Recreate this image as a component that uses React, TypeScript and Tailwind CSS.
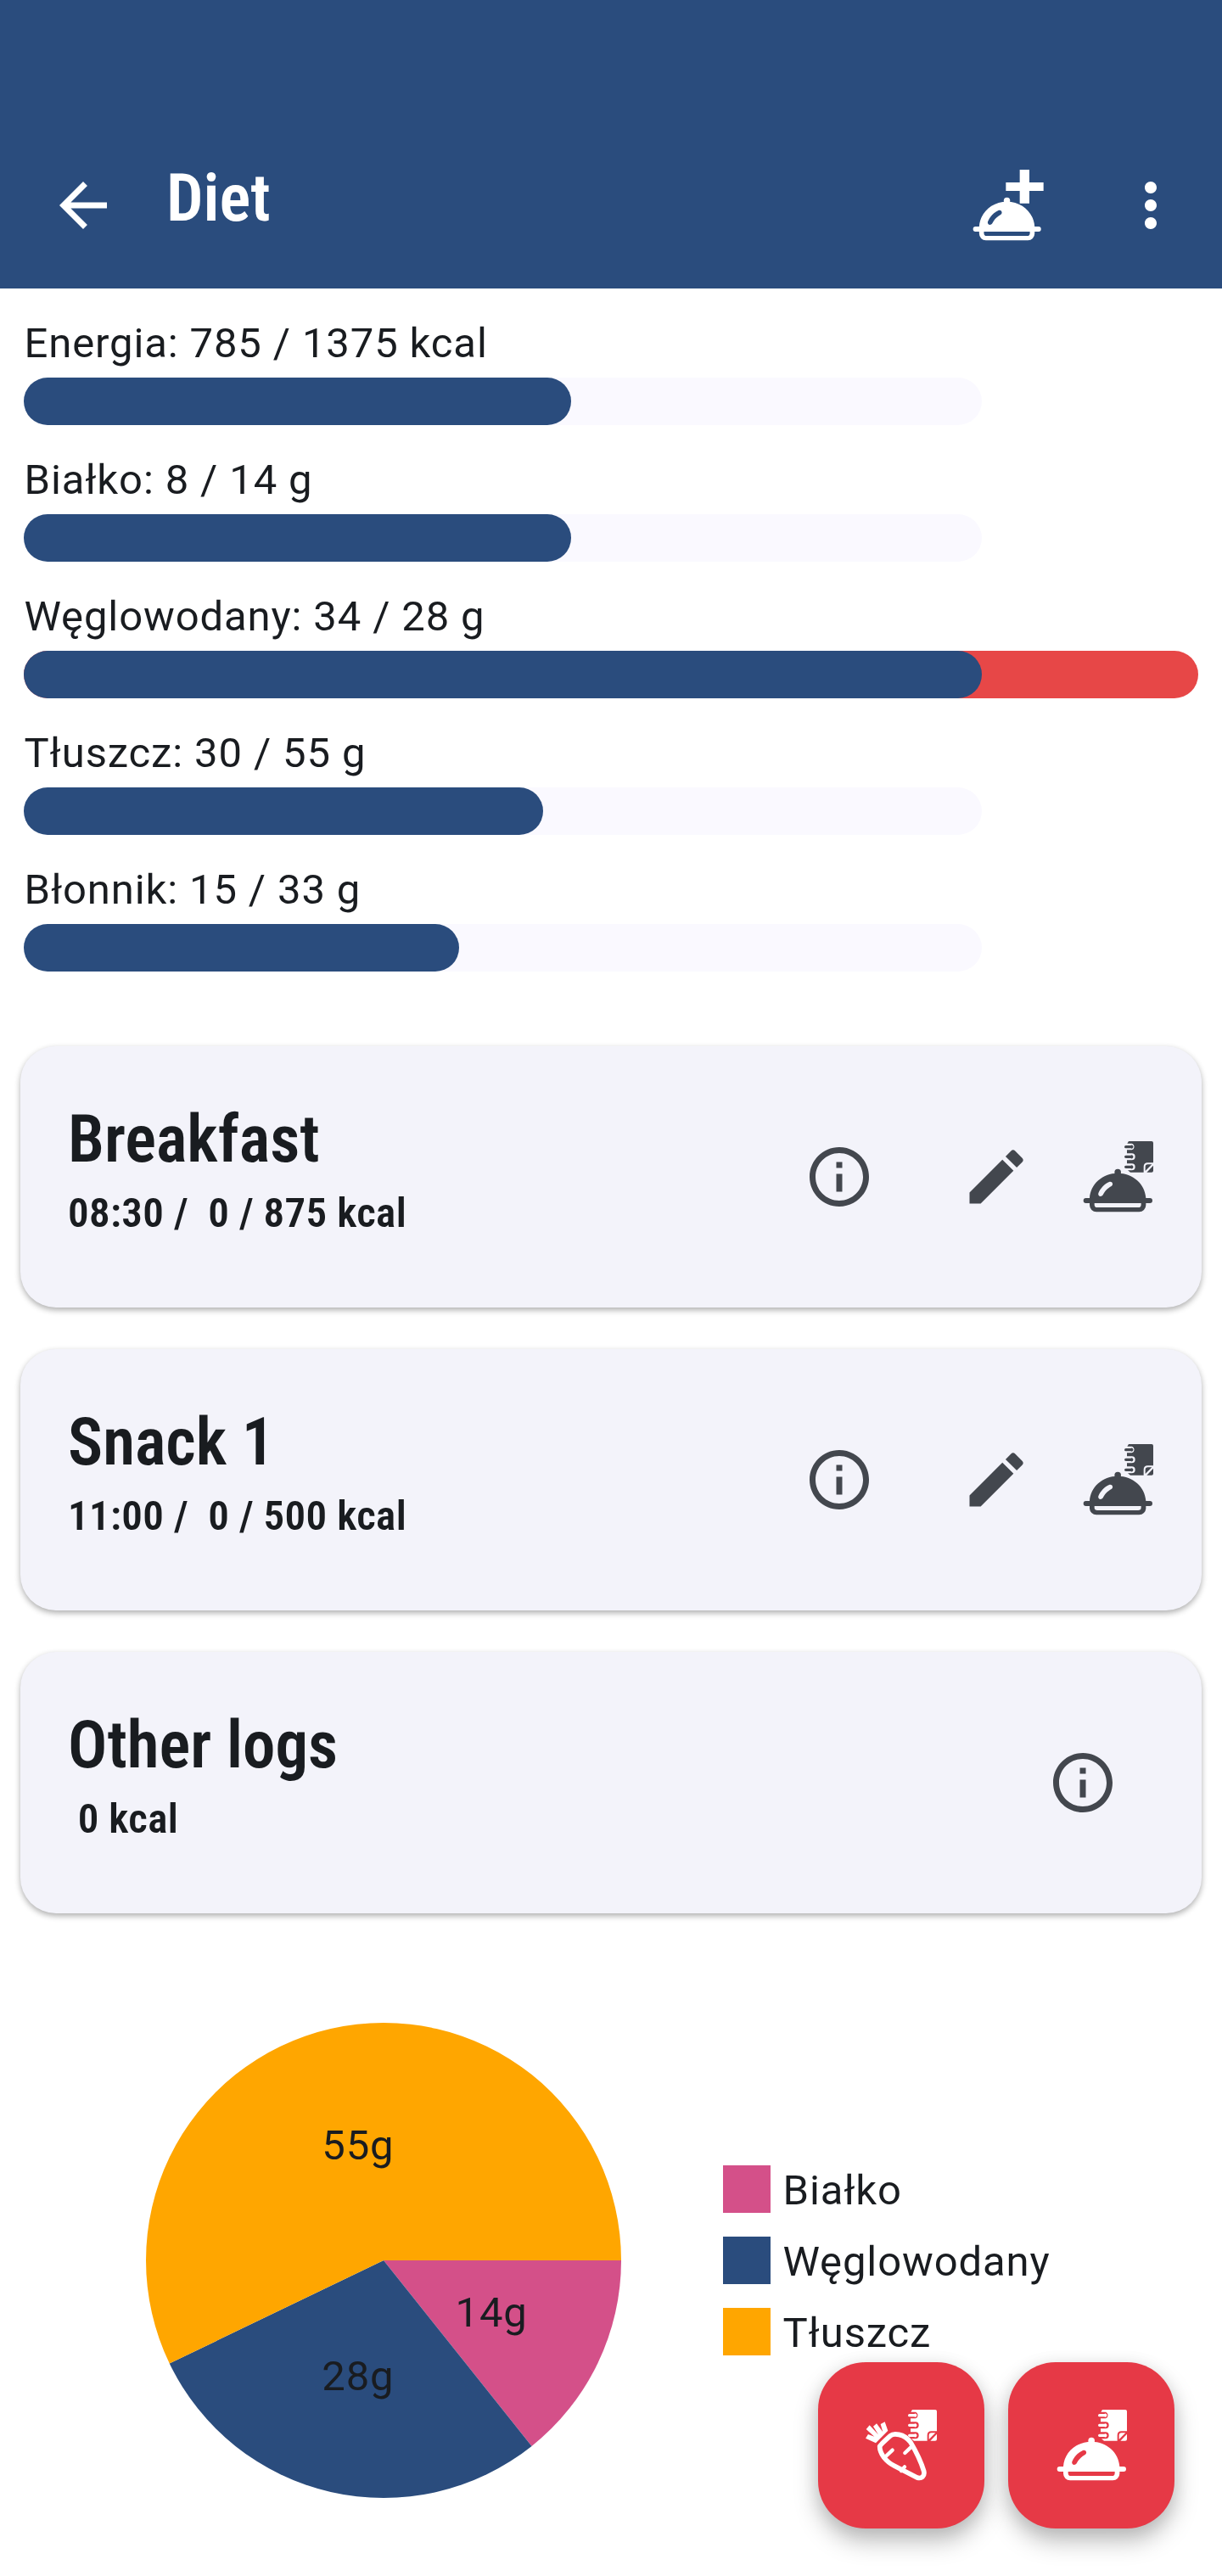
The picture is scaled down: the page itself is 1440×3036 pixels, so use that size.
import type { ReactNode } from "react";
import { MdArrowBack, MdEdit, MdInfoOutline, MdMoreVert } from "react-icons/md";

//data
const goals = [
  { label: "Energia: 785 / 1375 kcal", width: 645 },
  { label: "Białko: 8 / 14 g", width: 645 },
  { label: "Węglowodany: 34 / 28 g", width: 1129, over: true },
  { label: "Tłuszcz: 30 / 55 g", width: 612 },
  { label: "Błonnik: 15 / 33 g", width: 513 },
];

const legend = [
  { label: "Białko", color: "bg-[#d45089]" },
  { label: "Węglowodany", color: "bg-[#2a4c7d]" },
  { label: "Tłuszcz", color: "bg-[#ffa600]" },
];

const slices = [
  { grams: 13.75, fill: "fill-[#d45089]" },
  { grams: 27.5, fill: "fill-[#2a4c7d]" },
  { grams: 55, fill: "fill-[#ffa600]" },
];

//icons
function Dish() {
  return (
    <g>
      <circle cx="126.5" cy="110" r="11.5" />
      <path
        fillRule="evenodd"
        d="M14 201H27C30 152 72 113 126.5 113S223 152 226 201H240a9 9 0 0 1 0 18H226V226a24 24 0 0 1-24 24H51a24 24 0 0 1-24-24V219H14a9 9 0 0 1 0-18ZM44 219V224a10 10 0 0 0 10 10H199a10 10 0 0 0 10-10V219ZM58 184C64 168 79 151 96 144C107 140 113 153 104 159C89 168 81 176 74 190C68 199 55 195 58 184Z"
      />
    </g>
  );
}

function Notebook() {
  return (
    <g>
      <path d="M165 0H246a6 6 0 0 1 6 6V76H232C223 76 218 82 218 90V110H171L162 103H176A12 12 0 0 0 176 79H159V67H176A12 12 0 0 0 176 43H159V31H176A12 12 0 0 0 176 8H160Z" />
      <path d="M155 15H172A6 6 0 1 1 172 25H155a5 5 0 0 1 0-10ZM155 50H172A6 6 0 1 1 172 60H155a5 5 0 0 1 0-10ZM155 86H172A6 6 0 1 1 172 96H155a5 5 0 0 1 0-10Z" />
      <path d="M224 105V91Q224 82 233 82H247ZM252 86V104Q252 110 246 110H229Z" />
    </g>
  );
}

function DishLogIcon() {
  return (
    <svg viewBox="0 0 252 252" className="size-[84px]" fill="currentColor">
      <Dish />
      <Notebook />
    </svg>
  );
}

function DishAddIcon() {
  return (
    <svg viewBox="0 0 252 252" className="size-[84px]" fill="currentColor">
      <g transform="translate(-3 0) scale(.985 1)">
        <Dish />
      </g>
      <path d="M167 0h34v45h50v30h-50v44h-34V75h-49V45h49z" />
    </svg>
  );
}

function CarrotLogIcon() {
  return (
    <svg viewBox="0 0 252 252" className="size-[84px]" fill="currentColor">
      <Notebook />
      <path className="fill-[#e63946]" d="M140 84L152 95L166 112L190 145H130Z" />
      <path d="M36 118L0 101L9 87L31 95L2 69L14 55L45 88L27 59L39 49L61 79L53 51L68 43L79 74Z" />
      <path
        d="M88 92C98 83 135 83 159 115C175 142 195 180 206 217C210 236 198 245 182 240L102 199C70 182 50 155 50 130Q52 124 88 92Z"
        className="fill-[#e63946] stroke-current"
        strokeWidth="17"
        strokeLinejoin="round"
      />
      <path
        d="M95 143L65 171M139 153L163 130M138 202L126 216"
        className="stroke-current"
        strokeWidth="13"
        strokeLinecap="round"
      />
    </svg>
  );
}

function GoalBar({ label, width, over }: { label: string; width: number; over?: boolean }) {
  return (
    <div className="mb-7">
      <p className="pt-0.5 pl-[0.5px] leading-[70px]">{label}</p>
      <div className={over ? "mt-[5px] h-14 w-full rounded-full bg-[#e74747]" : "mt-[5px] h-14 w-[1129px] rounded-full bg-[#faf9ff]"}>
        <div className="h-14 rounded-full bg-[#2a4c7d]" style={{ width }}></div>
      </div>
    </div>
  );
}

function MealCard({ title, subtitle, children }: { title: string; subtitle: string; children: ReactNode }) {
  return (
    <div className="flex h-[308px] items-center justify-between rounded-[42px] bg-[#f3f3fa] pl-14 shadow-[0_3px_7px_rgba(0,0,0,0.32)]">
      <div className="pb-[17px] font-semibold [font-stretch:75%]">
        <h2 className="text-[77px] leading-[103px] tracking-normal">{title}</h2>
        <p className="leading-[70px] tracking-[0.35px] whitespace-pre">{subtitle}</p>
      </div>
      <div className="flex items-center text-[#43474e]">{children}</div>
    </div>
  );
}

function Pie() {
  const total = slices.reduce((sum, s) => sum + s.grams, 0);
  const at = (grams: number, r: number) => {
    const a = (grams / total) * Math.PI * 2;
    return [280 + r * Math.cos(a), 280 + r * Math.sin(a)];
  };
  let start = 0;

  return (
    <svg viewBox="0 0 560 560" className="size-[560px]">
      {slices.map((s) => {
        const [x1, y1] = at(start, 280);
        const [x2, y2] = at(start + s.grams, 280);
        const [tx, ty] = at(start + s.grams / 2, 140);
        start += s.grams;
        return (
          <g key={s.grams}>
            <path
              className={s.fill}
              d={`M280 280L${x1} ${y1}A280 280 0 ${s.grams > total / 2 ? 1 : 0} 1 ${x2} ${y2}Z`}
            />
            <text x={tx + 1} y={ty + 17} textAnchor="middle" className="fill-[#191c20]">
              {Math.round(s.grams)}g
            </text>
          </g>
        );
      })}
    </svg>
  );
}

export default function App() {
  return (
    <main className="relative h-[3036px] w-[1440px] overflow-hidden bg-white font-['Roboto',sans-serif] text-[49px] tracking-[0.875px] text-[#191c20]">
      {/* App bar */}
      <header className="flex h-[340px] items-center bg-[#2a4c7d] pt-[144px] pr-[42px] pl-14 text-white">
        <MdArrowBack className="size-[84px]" />
        <h1 className="ml-14 flex-1 pb-3.5 text-[77px] font-semibold tracking-normal [font-stretch:75%]">Diet</h1>
        <DishAddIcon />
        <MdMoreVert className="ml-[84px] size-[84px]" />
      </header>

      {/* Goals */}
      <section className="px-7 pt-7">
        {goals.map((g) => (
          <GoalBar key={g.label} {...g} />
        ))}
      </section>

      {/* Meals */}
      <section className="mt-[88px] flex flex-col gap-[49px] px-[24px]">
        <MealCard title="Breakfast" subtitle="08:30 /  0 / 875 kcal">
          <MdInfoOutline className="mr-[101px] size-[84px]" />
          <MdEdit className="mr-[59px] size-[84px]" />
          <div className="mr-[57.5px]">
            <DishLogIcon />
          </div>
        </MealCard>
        <MealCard title="Snack 1" subtitle="11:00 /  0 / 500 kcal">
          <MdInfoOutline className="mr-[101px] size-[84px]" />
          <MdEdit className="mr-[59px] size-[84px]" />
          <div className="mr-[57.5px]">
            <DishLogIcon />
          </div>
        </MealCard>
        <MealCard title="Other logs" subtitle=" 0 kcal">
          <MdInfoOutline className="mr-[98.5px] size-[84px]" />
        </MealCard>
      </section>

      {/* Macro chart */}
      <section className="mt-[129px] flex items-center pl-[172px]">
        <Pie />
        <ul className="ml-[120px] flex flex-col gap-7">
          {legend.map((l) => (
            <li key={l.label} className="flex h-14 items-center gap-[14.5px]">
              <span className={`size-14 ${l.color}`}></span>
              <span className="pt-[3px]">{l.label}</span>
            </li>
          ))}
        </ul>
      </section>

      {/* Floating buttons */}
      <div className="absolute right-14 bottom-14 flex gap-7 text-white">
        <button className="flex size-[196px] items-center justify-center rounded-[56px] bg-[#e63946] shadow-[0_15px_28px_rgba(0,0,0,0.26),0_2px_20px_rgba(0,0,0,0.08)]">
          <CarrotLogIcon />
        </button>
        <button className="flex size-[196px] items-center justify-center rounded-[56px] bg-[#e63946] shadow-[0_15px_28px_rgba(0,0,0,0.26),0_2px_20px_rgba(0,0,0,0.08)]">
          <DishLogIcon />
        </button>
      </div>
    </main>
  );
}
